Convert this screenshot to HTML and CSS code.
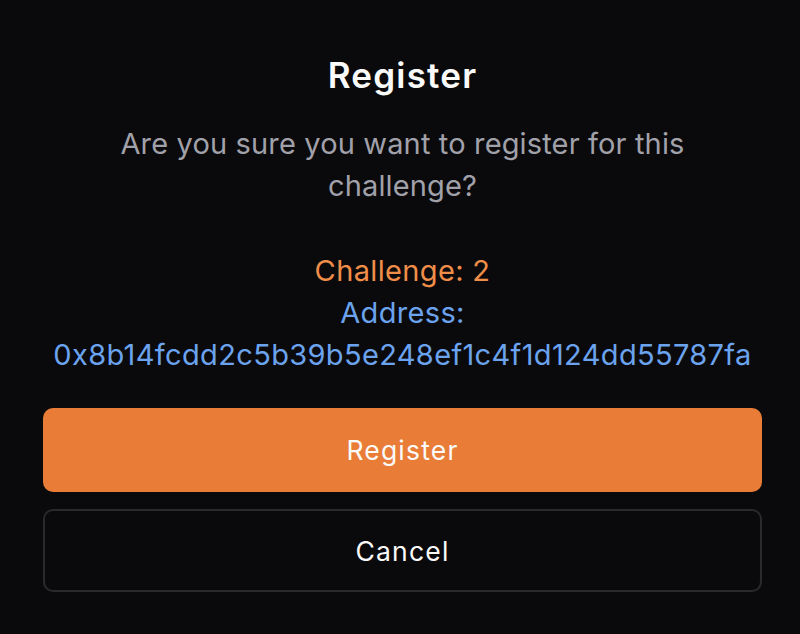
FILE: index.html
```html
<!DOCTYPE html>
<html>
<head>
<meta charset="utf-8">
<link rel="stylesheet" href="styles.css">
</head>
<body>
<div class="dialog">
  <h2 class="title">Register</h2>
  <p class="desc">Are you sure you want to register for this challenge?</p>
  <div class="details">
    <div class="challenge">Challenge: 2</div>
    <div class="address">Address:<br>0x8b14fcdd2c5b39b5e248ef1c4f1d124dd55787fa</div>
  </div>
  <div class="actions">
    <button class="btn btn-primary">Register</button>
    <button class="btn btn-outline">Cancel</button>
  </div>
</div>
</body>
</html>
```
FILE: styles.css
```css
html, body {
  margin: 0;
  padding: 0;
  background: #0a0a0c;
}
body {
  font-family: Inter, "Noto Sans", sans-serif;
  color: #fafafa;
  width: 800px;
  height: 634px;
  overflow: hidden;
}
.dialog {
  padding: 51px 38px 0 43px;
  display: flex;
  flex-direction: column;
  text-align: center;
}
.title {
  margin: 0;
  font-size: 35px;
  line-height: 49px;
  font-weight: 600;
  letter-spacing: 1.2px;
  color: #fafafa;
}
.desc {
  margin: 23px 0 0;
  font-size: 29px;
  line-height: 42px;
  letter-spacing: 0.15px;
  color: #a1a1aa;
  padding: 0 40px;
}
.details {
  margin-top: 43px;
  font-size: 29px;
  line-height: 42px;
  letter-spacing: 0.35px;
}
.challenge {
  color: #f08e49;
}
.address {
  color: #6ba3ee;
}
.actions {
  margin-top: 32px;
  display: flex;
  flex-direction: column;
  gap: 17px;
}
.btn {
  font-family: inherit;
  font-size: 26.5px;
  font-weight: 400;
  letter-spacing: 1.2px;
  height: 84px;
  border-radius: 10px;
  width: 100%;
  cursor: pointer;
}
.btn-primary {
  background: #e97d37;
  color: #fafafa;
  border: none;
}
.btn-outline {
  background: #0a0a0c;
  color: #fafafa;
  border: 2px solid #2a2a2e;
  height: 83px;
}
```
